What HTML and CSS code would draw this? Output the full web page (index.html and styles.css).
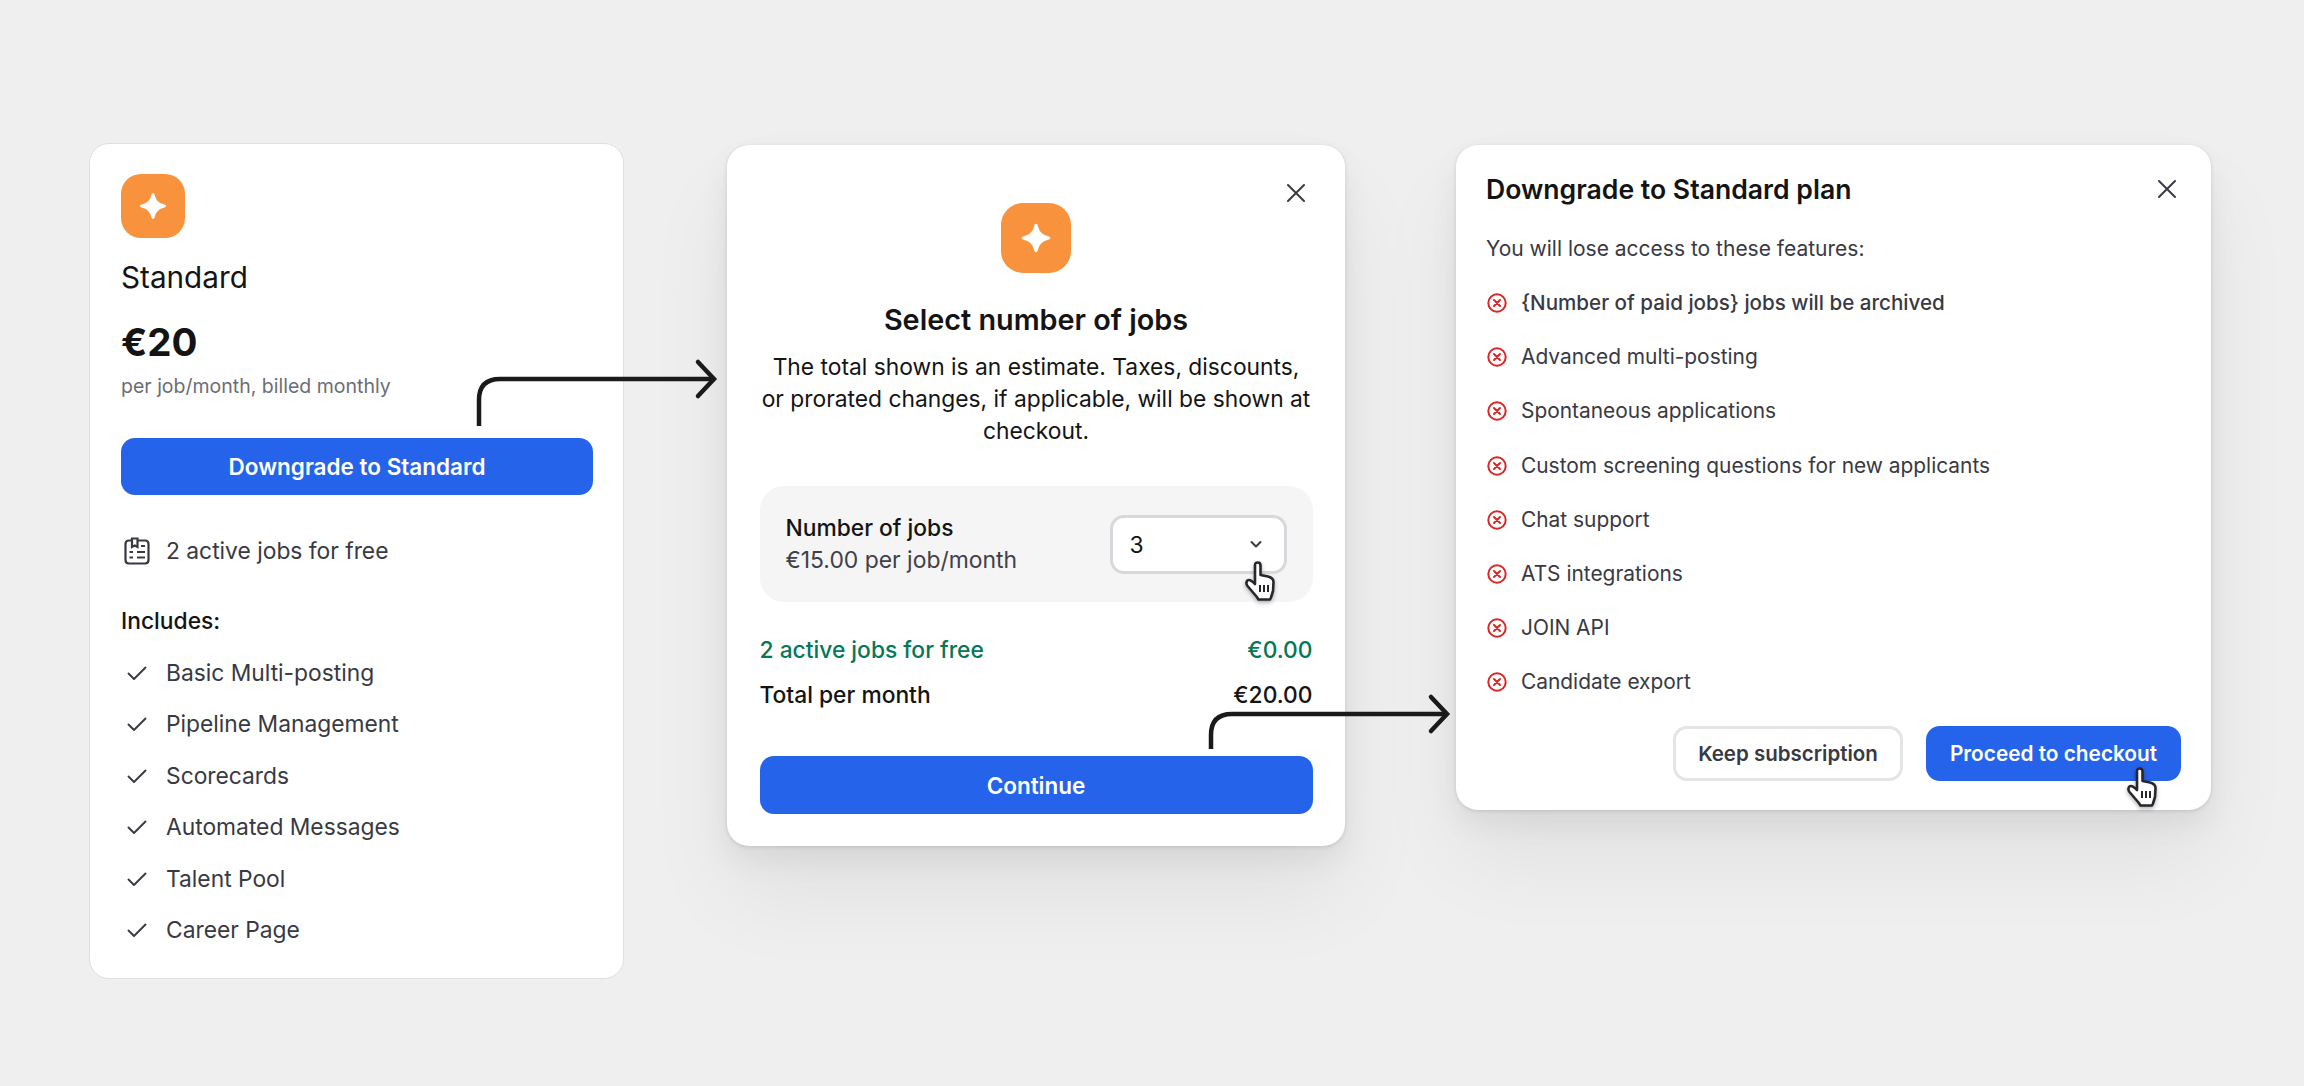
FILE: index.html
```html
<!DOCTYPE html>
<html lang="en">
<head>
    <meta charset="UTF-8">
    <title>Downgrade flow</title>
    <link rel="stylesheet" href="styles.css">
</head>
<body>
    <svg width="0" height="0" class="defs">
        <symbol id="star" viewBox="0 0 64 64">
            <path d="M32 19C33 19 33.5 20 34 22C35 26 38 29 42 30C44 30.5 45 31 45 32C45 33 44 33.5 42 34C38 35 35 38 34 42C33.5 44 33 45 32 45C31 45 30.5 44 30 42C29 38 26 35 22 34C20 33.5 19 33 19 32C19 31 20 30.5 22 30C26 29 29 26 30 22C30.5 20 31 19 32 19Z" fill="#fff"/>
        </symbol>
        <symbol id="check" viewBox="0 0 20 20">
            <path d="M1.5 10.5L7 16L18.5 4.5" fill="none" stroke="#383943" stroke-width="1.9" stroke-linecap="round" stroke-linejoin="round"/>
        </symbol>
        <symbol id="cross" viewBox="0 0 20 20">
            <circle cx="10" cy="10" r="8.7" fill="none" stroke="#dc2626" stroke-width="2"/>
            <path d="M7 7L13 13M13 7L7 13" fill="none" stroke="#dc2626" stroke-width="2" stroke-linecap="round"/>
        </symbol>
        <symbol id="close" viewBox="0 0 20 20">
            <path d="M2 2L18 18M18 2L2 18" fill="none" stroke="#3a3b44" stroke-width="2" stroke-linecap="round"/>
        </symbol>
        <symbol id="hand" viewBox="0 0 32 40">
            <path d="M11 4C11 2 12.5 1.5 13.8 1.5C15.5 1.5 16.5 2.8 16.5 4.5V14L24 15.5C28 16.5 29.5 18 29.5 21L29 30L27 36.5L26 38.5H14.500L12.500 35.500L3.500 25C1.500 22.500 2.500 19 5 19C7 19 9 21 11 23Z" fill="#fff" stroke="#26272c" stroke-width="2.600" stroke-linejoin="round"/>
            <path d="M16 24V31M20 24V31M24 24V31" fill="none" stroke="#26272c" stroke-width="2"/>
        </symbol>
    </svg>

    <div class="canvas">
        <section class="card plan">
            <div class="plan-icon"><svg width="64" height="64"><use href="#star"/></svg></div>
            <h2 class="plan-name">Standard</h2>
            <div class="plan-price">€20</div>
            <p class="plan-note">per job/month, billed monthly</p>
            <button class="btn plan-btn">Downgrade to Standard</button>
            <div class="row plan-free">
                <svg class="jobs-icon" width="28" height="28" viewBox="0 0 28 28" fill="none" stroke="#383943" stroke-width="2.200">
                    <path d="M9 3.500H6C3.800 3.500 2.500 4.800 2.500 7V23C2.500 25.200 3.800 26.500 6 26.500H22C24.200 26.500 25.500 25.200 25.500 23V7C25.500 4.800 24.200 3.500 22 3.500H15"/>
                    <path d="M9 1.500H14.500V10L11.800 8.500L9 10Z"/>
                    <path d="M18 9H22M6.500 15H10M14 15H22M6.500 20.500H10M14 20.500H22"/>
                </svg>
                <span>2 active jobs for free</span>
            </div>
            <h3 class="plan-includes">Includes:</h3>
            <ul class="plan-list">
                <li class="row"><svg class="check" width="20" height="20"><use href="#check"/></svg>Basic Multi-posting</li>
                <li class="row"><svg class="check" width="20" height="20"><use href="#check"/></svg>Pipeline Management</li>
                <li class="row"><svg class="check" width="20" height="20"><use href="#check"/></svg>Scorecards</li>
                <li class="row"><svg class="check" width="20" height="20"><use href="#check"/></svg>Automated Messages</li>
                <li class="row"><svg class="check" width="20" height="20"><use href="#check"/></svg>Talent Pool</li>
                <li class="row"><svg class="check" width="20" height="20"><use href="#check"/></svg>Career Page</li>
            </ul>
        </section>

        <section class="card modal select-modal">
            <svg class="close close-a" width="20" height="20"><use href="#close"/></svg>
            <div class="modal-icon"><svg width="70" height="70"><use href="#star"/></svg></div>
            <h2 class="modal-title">Select number of jobs</h2>
            <p class="modal-text">The total shown is an estimate. Taxes, discounts, or prorated changes, if applicable, will be shown at checkout.</p>
            <div class="panel">
                <div>
                    <div class="panel-label">Number of jobs</div>
                    <div class="panel-sub">€15.00 per job/month</div>
                </div>
                <div class="select">
                    <span>3</span>
                    <svg width="14" height="9" viewBox="0 0 14 9"><path d="M2.500 2L7 6.500L11.500 2" fill="none" stroke="#383943" stroke-width="2" stroke-linecap="round" stroke-linejoin="round"/></svg>
                    <svg class="hand hand-a" width="32" height="40"><use href="#hand"/></svg>
                </div>
            </div>
            <div class="sum sum-free"><span>2 active jobs for free</span><span>€0.00</span></div>
            <div class="sum sum-total"><span>Total per month</span><span>€20.00</span></div>
            <button class="btn continue-btn">Continue</button>
        </section>

        <section class="card modal confirm-modal">
            <svg class="close close-b" width="20" height="20"><use href="#close"/></svg>
            <h2 class="confirm-title">Downgrade to Standard plan</h2>
            <p class="confirm-text">You will lose access to these features:</p>
            <ul class="confirm-list">
                <li class="row strong"><svg width="20" height="20"><use href="#cross"/></svg>{Number of paid jobs} jobs will be archived</li>
                <li class="row"><svg width="20" height="20"><use href="#cross"/></svg>Advanced multi-posting</li>
                <li class="row"><svg width="20" height="20"><use href="#cross"/></svg>Spontaneous applications</li>
                <li class="row"><svg width="20" height="20"><use href="#cross"/></svg>Custom screening questions for new applicants</li>
                <li class="row"><svg width="20" height="20"><use href="#cross"/></svg>Chat support</li>
                <li class="row"><svg width="20" height="20"><use href="#cross"/></svg>ATS integrations</li>
                <li class="row"><svg width="20" height="20"><use href="#cross"/></svg>JOIN API</li>
                <li class="row"><svg width="20" height="20"><use href="#cross"/></svg>Candidate export</li>
            </ul>
            <div class="confirm-actions">
                <button class="btn btn-ghost">Keep subscription</button>
                <button class="btn btn-checkout">
                    Proceed to checkout
                    <svg class="hand hand-b" width="32" height="40"><use href="#hand"/></svg>
                </button>
            </div>
        </section>

        <!-- connectors between the steps -->
        <svg class="arrows" width="2304" height="1086" fill="none" stroke="#1a1a1a" stroke-width="4.500">
            <path d="M479 426V400Q479 379 500 379H713"/>
            <path d="M698 362L714 379L698 396" stroke-linecap="round"/>
            <path d="M1211 749V735Q1211 714 1232 714H1446"/>
            <path d="M1431 697L1447 714L1431 731" stroke-linecap="round"/>
        </svg>
    </div>
</body>
</html>
```

FILE: styles.css
```css
* {
    margin: 0;
    padding: 0;
    box-sizing: border-box;
}

body {
    background-color: #efefef;
    color: #141414;
    font-family: Inter, "Liberation Sans", sans-serif;
    overflow: hidden;
}

.defs {
    position: absolute;
}

.canvas {
    position: relative;
    width: 2304px;
    height: 1086px;
    display: flex;
    align-items: flex-start;
    padding: 145px 0 0 89px;
}

.card {
    position: relative;
    background-color: white;
}

.row {
    display: flex;
    align-items: center;
}

ul {
    list-style: none;
}

h2,
h3 {
    font-weight: 600;
}

.btn {
    display: block;
    border: none;
    border-radius: 14px;
    background-color: #2563eb;
    color: white;
    font-family: inherit;
    font-size: 22.5px;
    font-weight: 600;
}

/* plan card */
.plan {
    width: 535px;
    height: 836px;
    margin-top: -2px;
    padding: 30px 31px 0 31px;
    border: 1px solid #dfdfdf;
    border-radius: 20px;
}

.plan-icon {
    width: 64px;
    height: 64px;
    border-radius: 20px;
    background-color: #f9923c;
}

.plan-name {
    margin-top: 22px;
    font-size: 29.7px;
    font-weight: 400;
    line-height: 35px;
}

.plan-price {
    margin-top: 23px;
    font-size: 38.5px;
    font-weight: 700;
    line-height: 48px;
}

.plan-note {
    margin-top: 6px;
    color: #6b6d76;
    font-size: 19.5px;
    line-height: 28px;
}

.plan-btn {
    width: 472px;
    height: 57px;
    margin-top: 38px;
}

.plan-free {
    margin-top: 40px;
    color: #383943;
    font-size: 22.8px;
    line-height: 32px;
}

.jobs-icon {
    margin-left: 2px;
    margin-right: 15px;
}

.plan-includes {
    margin-top: 39px;
    font-size: 22.8px;
    font-weight: 500;
    line-height: 30px;
}

.plan-list {
    display: flex;
    flex-direction: column;
    gap: 19.4px;
    margin-top: 21px;
    color: #383943;
    font-size: 22.8px;
    line-height: 32px;
}

.check {
    margin-left: 6px;
    margin-right: 19px;
}

/* modals */
.modal {
    border-radius: 22px;
    box-shadow: 0 1px 4px rgba(0, 0, 0, 0.12), 0 14px 30px rgba(0, 0, 0, 0.06), 0 50px 90px rgba(0, 0, 0, 0.06);
}

.close {
    position: absolute;
}

.select-modal {
    width: 618px;
    height: 701px;
    margin-left: 103px;
    padding: 58px 32.5px 0 32.5px;
    text-align: center;
}

.close-a {
    top: 38px;
    right: 39px;
}

.modal-icon {
    width: 70px;
    height: 70px;
    margin: 0 auto;
    border-radius: 22px;
    background-color: #f9923c;
}

.modal-title {
    margin-top: 27px;
    font-size: 28.8px;
    line-height: 40px;
}

.modal-text {
    margin-top: 11px;
    font-size: 22.8px;
    line-height: 32px;
}

.panel {
    display: flex;
    align-items: center;
    justify-content: space-between;
    height: 116px;
    margin-top: 39px;
    padding: 0 26px 0 26px;
    border-radius: 24px;
    background-color: #f5f5f5;
    text-align: left;
}

.panel-label {
    font-size: 22.8px;
    font-weight: 500;
    line-height: 32px;
}

.panel-sub {
    color: #3f4049;
    font-size: 22.9px;
    line-height: 32px;
}

.select {
    position: relative;
    display: flex;
    align-items: center;
    justify-content: space-between;
    width: 177px;
    height: 59px;
    padding: 0 21px 0 17px;
    border: 3px solid #d8d8dc;
    border-radius: 14px;
    background-color: white;
    font-size: 22.8px;
}

.hand {
    position: absolute;
    filter: drop-shadow(0 2px 2px rgba(0, 0, 0, 0.3));
}

.hand-a {
    top: 43px;
    left: 131px;
}

.sum {
    display: flex;
    justify-content: space-between;
    font-size: 22.8px;
    font-weight: 500;
    line-height: 32px;
}

.sum-free {
    margin-top: 32px;
    color: #047857;
}

.sum-total {
    margin-top: 13px;
}

.continue-btn {
    width: 100%;
    height: 58px;
    margin-top: 45px;
}

.confirm-modal {
    width: 755px;
    height: 665px;
    margin-left: 111px;
    padding: 26px 30px 0 30px;
}

.close-b {
    top: 34px;
    right: 34px;
}

.confirm-title {
    font-size: 26.6px;
    line-height: 37px;
}

.confirm-text {
    margin-top: 26px;
    color: #383943;
    font-size: 21px;
    line-height: 30px;
}

.confirm-list {
    display: flex;
    flex-direction: column;
    gap: 24.2px;
    margin-top: 24px;
    color: #383943;
    font-size: 20.9px;
    line-height: 30px;
}

.confirm-list svg {
    margin-left: 1px;
    margin-right: 14px;
}

.strong {
    font-size: 20.6px;
    font-weight: 500;
}

.confirm-actions {
    display: flex;
    justify-content: flex-end;
    gap: 23px;
    margin-top: 29px;
}

.confirm-actions .btn {
    position: relative;
    height: 55px;
    font-size: 20.8px;
}

.confirm-actions .btn-ghost {
    width: 230px;
    border: 3px solid #e4e4e6;
    background-color: white;
    color: #383943;
    font-size: 20.5px;
}

.btn-checkout {
    width: 255px;
}

.hand-b {
    top: 41px;
    left: 200px;
}

.arrows {
    position: absolute;
    top: 0;
    left: 0;
}
```
